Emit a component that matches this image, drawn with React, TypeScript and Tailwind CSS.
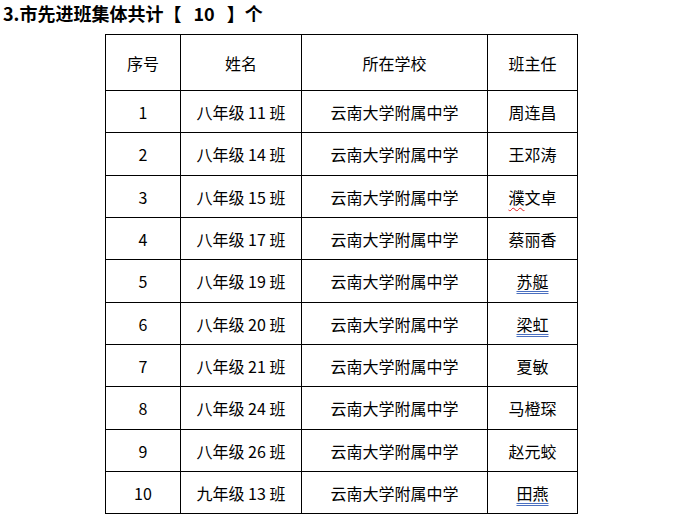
import React from "react";

type Row = {
  no: string;
  name: string;
  school: string;
  teacher: React.ReactNode;
};

const font = { fontFamily: '"Noto Sans CJK SC", "Noto Sans", sans-serif' };

// grammar-check style double blue underline
function Blue({ children }: { children: React.ReactNode }) {
  return (
    <span className="underline decoration-double decoration-[#4a6fc0] decoration-1 underline-offset-[3px]">
      {children}
    </span>
  );
}

const school = "云南大学附属中学";

const rows: Row[] = [
  { no: "1", name: "八年级 11 班", school, teacher: "周连昌" },
  { no: "2", name: "八年级 14 班", school, teacher: "王邓涛" },
  {
    no: "3",
    name: "八年级 15 班",
    school,
    teacher: (
      <>
        <span className="underline decoration-wavy decoration-[#e02020] decoration-1 underline-offset-[3px]">
          濮
        </span>
        文卓
      </>
    ),
  },
  { no: "4", name: "八年级 17 班", school, teacher: "蔡丽香" },
  { no: "5", name: "八年级 19 班", school, teacher: <Blue>苏艇</Blue> },
  { no: "6", name: "八年级 20 班", school, teacher: <Blue>梁虹</Blue> },
  { no: "7", name: "八年级 21 班", school, teacher: "夏敏" },
  { no: "8", name: "八年级 24 班", school, teacher: "马橙琛" },
  { no: "9", name: "八年级 26 班", school, teacher: "赵元蛟" },
  { no: "10", name: "九年级 13 班", school, teacher: <Blue>田燕</Blue> },
];

const heights = ["h-[42px]", "h-[43px]", "h-[42px]", "h-[42px]", "h-[43px]", "h-[42px]", "h-[42px]", "h-[43px]", "h-[42px]", "h-[42px]"];

export default function App() {
  return (
    <div className="w-[682px] h-[517px] bg-white text-black overflow-hidden" style={font}>
      {/* Heading */}
      <div className="flex items-center pl-[3px] pt-[1px] text-[18px] font-bold leading-[24px]">
        <span>3.市先进班集体共计【</span>
        <span className="px-[12px]">10</span>
        <span>】个</span>
      </div>

      {/* Table */}
      <table className="ml-[105px] mt-[9px] border-collapse table-fixed text-[16px] leading-none">
        <colgroup>
          <col className="w-[75px]" />
          <col className="w-[121px]" />
          <col className="w-[186px]" />
          <col className="w-[90px]" />
        </colgroup>
        <thead>
          <tr className="h-[56px]">
            {["序号", "姓名", "所在学校", "班主任"].map((h) => (
              <th key={h} className="border border-black font-normal text-center align-middle p-0">
                {h}
              </th>
            ))}
          </tr>
        </thead>
        <tbody>
          {rows.map((r, i) => (
            <tr key={r.no} className={heights[i]}>
              <td className="border border-black text-center align-middle p-0">{r.no}</td>
              <td className="border border-black text-center align-middle p-0 whitespace-nowrap">{r.name}</td>
              <td className="border border-black text-center align-middle p-0">{r.school}</td>
              <td className="border border-black text-center align-middle p-0">{r.teacher}</td>
            </tr>
          ))}
        </tbody>
      </table>
    </div>
  );
}
